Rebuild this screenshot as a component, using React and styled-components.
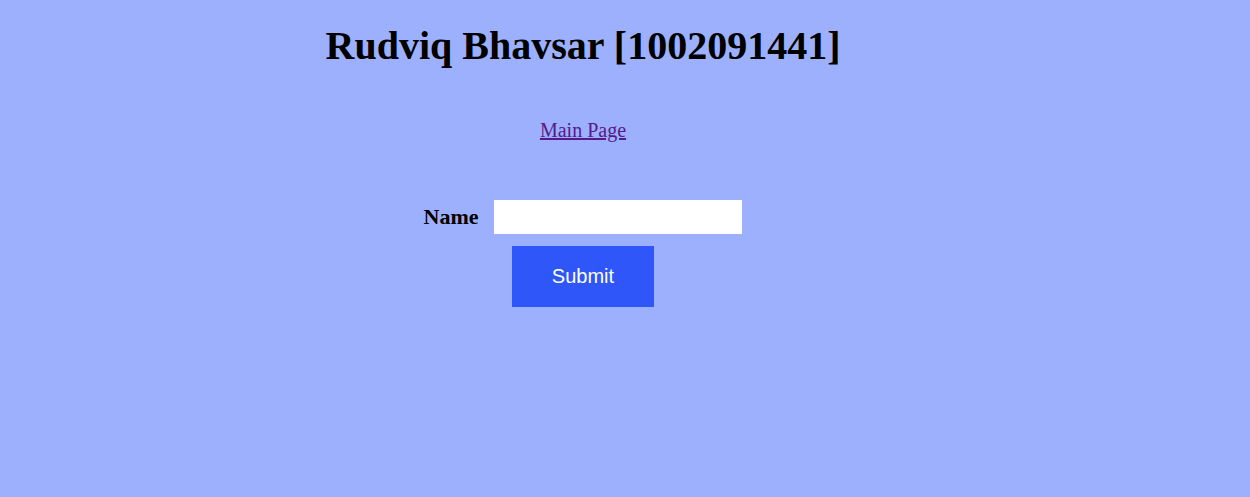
import React from 'react';
import styled, { createGlobalStyle } from 'styled-components';

const GlobalStyle = createGlobalStyle`
    body {
        margin: 8px;
        background: #9db0fe;
        font-family: "Liberation Serif", "Times New Roman", serif;
    }
`;

const Page = styled.div`
    width: 1150px;
    display: flex;
    flex-direction: column;
    align-items: center;
`;

const Title = styled.h1`
    font-size: 40px;
    font-weight: bold;
    margin: 14px 0 0;
    color: #000;
`;

const NavLink = styled.a`
    margin-top: 50px;
    font-size: 20px;
    color: #551a8b;
`;

const Form = styled.form`
    margin-top: 58px;
    display: flex;
    flex-direction: column;
    align-items: center;
    gap: 12px;
`;

const Row = styled.div`
    display: flex;
    align-items: center;
    gap: 16px;
`;

const Label = styled.label`
    font-size: 22px;
    font-weight: bold;
`;

const Input = styled.input`
    width: 248px;
    height: 34px;
    border: none;
    padding: 0 6px;
    box-sizing: border-box;
    background: #fff;
    outline: none;
`;

const Button = styled.button`
    width: 142px;
    height: 61px;
    border: none;
    background: #2f56f9;
    color: #fff;
    font-family: "Liberation Sans", Arial, sans-serif;
    font-size: 20px;
    cursor: pointer;
`;

export default function App() {
    return (
        <>
            <GlobalStyle />
            <Page>
                <Title>Rudviq Bhavsar [1002091441]</Title>
                <NavLink href="#">Main Page</NavLink>
                <Form onSubmit={e => e.preventDefault()}>
                    <Row>
                        <Label htmlFor="name">Name</Label>
                        <Input id="name" type="text" />
                    </Row>
                    <Button type="submit">Submit</Button>
                </Form>
            </Page>
        </>
    );
}
